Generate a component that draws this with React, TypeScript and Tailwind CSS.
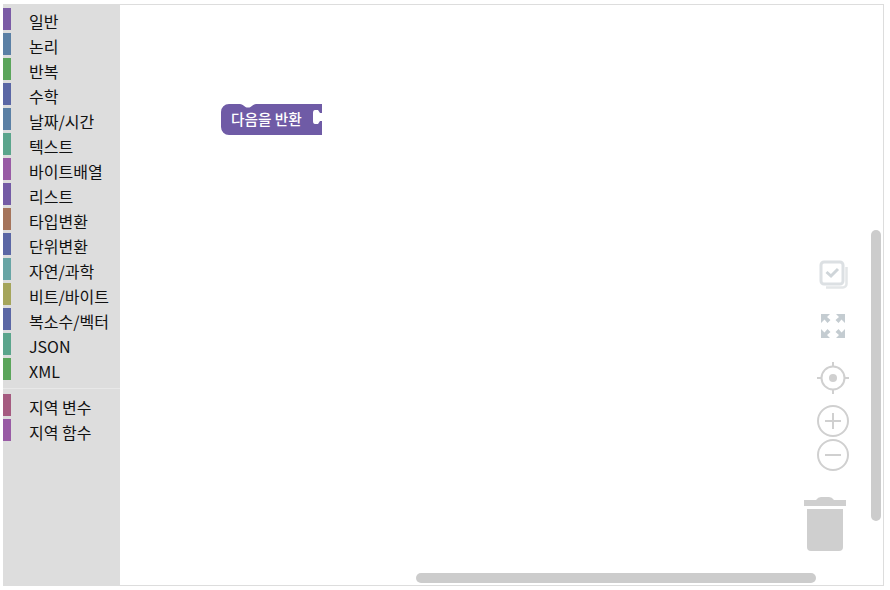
const categories = [
  { label: '일반', color: 'bg-[#7b5ba6]' },
  { label: '논리', color: 'bg-[#5b80a5]' },
  { label: '반복', color: 'bg-[#5ba55b]' },
  { label: '수학', color: 'bg-[#5b67a5]' },
  { label: '날짜/시간', color: 'bg-[#5b80a5]' },
  { label: '텍스트', color: 'bg-[#5ba58c]' },
  { label: '바이트배열', color: 'bg-[#995ba5]' },
  { label: '리스트', color: 'bg-[#745ba5]' },
  { label: '타입변환', color: 'bg-[#a5745b]' },
  { label: '단위변환', color: 'bg-[#5b67a5]' },
  { label: '자연/과학', color: 'bg-[#68a5a5]' },
  { label: '비트/바이트', color: 'bg-[#a5a55b]' },
  { label: '복소수/벡터', color: 'bg-[#5b67a5]' },
  { label: 'JSON', color: 'bg-[#5ba58c]' },
  { label: 'XML', color: 'bg-[#5ba55b]' },
];

const localCategories = [
  { label: '지역 변수', color: 'bg-[#a55b80]' },
  { label: '지역 함수', color: 'bg-[#995ba5]' },
];

const Row = ({ label, color }: { label: string; color: string }) => (
  <div className="flex h-[25px] items-start pt-[3px]">
    <div className={`h-[22px] w-2 ${color}`} />
    <span className="ml-[18px] text-[16px] leading-[26px] text-[#111111]">{label}</span>
  </div>
);

const Block = () => (
  <div className="absolute left-[101px] top-[99px] h-[31px] w-[101px]">
    <svg width="101" height="31" viewBox="0 0 101 31" className="absolute left-0 top-0">
      <path
        d="M0 8 a8 8 0 0 1 8 -8 H19 q2 0 3.500 1.500 l2 1.500 q1 .5 2 .5 h1 q1 0 2 -.5 l2 -1.500 q1.500 -1.500 3.500 -1.500 H101 V9 H99 L97 6 H94 Q92 6 92 9 V17 Q92 20 94 20 H97 L99 17 H101 V31 H8 a8 8 0 0 1 -8 -8 Z"
        fill="#6f5ba6"
      />
    </svg>
    <span className="absolute left-[10px] top-[5px] text-[14.67px] font-medium leading-[20px] text-white">
      다음을 반환
    </span>
  </div>
);

const Controls = () => (
  <div className="absolute right-[33px] top-[255px] flex flex-col items-end">
    <svg width="30" height="30" viewBox="0 0 30 30" className="mr-px" fill="none">
      <rect x="2" y="2" width="22" height="22" rx="3" stroke="#dce0e3" strokeWidth="3" />
      <path d="M7.500 12 l4.500 4 l7 -7" stroke="#cfd5d9" strokeWidth="3" />
      <path d="M27.500 7 v17 a3.500 3.500 0 0 1 -3.500 3.500 H7" stroke="#e3e6e8" strokeWidth="2.500" />
    </svg>
    <svg width="26" height="26" viewBox="0 0 26 26" className="mr-1 mt-[23px]" fill="#c4ccd1">
      <path d="M1 1 h9 l-3 3 l3.500 3 l-3 3 l-3 -3.500 L1 10 Z" />
      <path d="M25 1 h-9 l3 3 l-3.500 3 l3 3 l3 -3.500 L25 10 Z" />
      <path d="M1 25 h9 l-3 -3 l3.500 -3 l-3 -3 l-3 3.500 L1 16 Z" />
      <path d="M25 25 h-9 l3 -3 l-3.500 -3 l3 -3 l3 3.500 L25 16 Z" />
    </svg>
    <svg width="34" height="34" viewBox="0 0 34 34" className="mt-[22px]" fill="none" stroke="#d0d0d0">
      <circle cx="17" cy="17" r="11.500" strokeWidth="2" />
      <circle cx="17" cy="17" r="4" fill="#d0d0d0" stroke="none" />
      <path d="M17 1 v5 M17 28 v5 M1 17 h5 M28 17 h5" strokeWidth="2" />
    </svg>
    <svg width="34" height="34" viewBox="0 0 34 34" className="mt-[9px]" fill="none" stroke="#d0d0d0" strokeWidth="2">
      <circle cx="17" cy="17" r="15" />
      <path d="M17 9 v16 M9 17 h16" />
    </svg>
    <svg width="34" height="34" viewBox="0 0 34 34" fill="none" stroke="#d0d0d0" strokeWidth="2">
      <circle cx="17" cy="17" r="15" />
      <path d="M9 17 h16" />
    </svg>
    <svg width="42" height="56" viewBox="0 0 42 56" className="mr-1 mt-6" fill="#cfcfcf">
      <path d="M0 4 h12 q2 -3 5 -3 h8 q3 0 5 3 h12 v6 H0 Z" />
      <path d="M3 13 h36 v38 a4 4 0 0 1 -4 4 H7 a4 4 0 0 1 -4 -4 Z" />
    </svg>
  </div>
);

export default function App() {
  return (
    <div className="h-[590px] w-[890px] bg-white pl-[3px] pt-1 font-['Noto_Sans_CJK_KR','Noto_Sans',sans-serif]">
      <div className="flex h-[582px] w-[881px] border-b border-r border-t border-[#dddddd]">
        <div className="w-[117px] shrink-0 bg-[#dddddd]">
          {categories.map((c) => (
            <Row key={c.label} {...c} />
          ))}
          <div className="mb-[2px] mt-2 h-px bg-[#e8e8e8]" />
          {localCategories.map((c) => (
            <Row key={c.label} {...c} />
          ))}
        </div>
        <div className="relative flex-1 bg-white">
          <Block />
          <Controls />
          <div className="absolute bottom-[2px] left-[296px] h-[10px] w-[400px] rounded-[5px] bg-[#cccccc]" />
          <div className="absolute right-[2px] top-[225px] h-[291px] w-[10px] rounded-[5px] bg-[#cccccc]" />
        </div>
      </div>
    </div>
  );
}
